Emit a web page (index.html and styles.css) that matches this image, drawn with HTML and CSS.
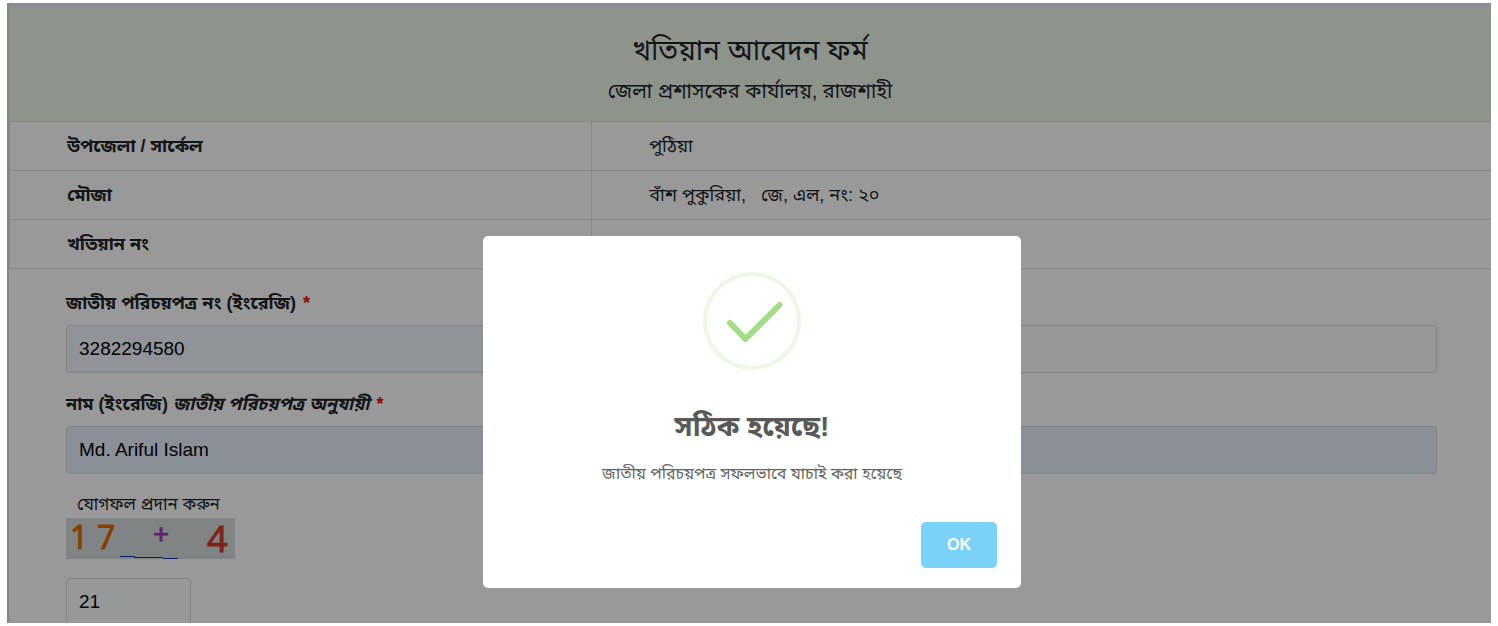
FILE: index.html
```html
<!DOCTYPE html>
<html lang="bn">
<head>
<meta charset="utf-8">
<meta name="viewport" content="width=device-width, initial-scale=1">
<title>খতিয়ান আবেদন ফর্ম</title>
<link rel="stylesheet" href="styles.css">
</head>
<body>
<div class="frame">
  <main class="page">
    <header class="page-header">
      <h1 class="page-title">খতিয়ান আবেদন ফর্ম</h1>
      <p class="page-subtitle">জেলা প্রশাসকের কার্যালয়, রাজশাহী</p>
    </header>
    <table class="info">
      <tbody>
        <tr><th scope="row">উপজেলা / সার্কেল</th><td>পুঠিয়া</td></tr>
        <tr><th scope="row">মৌজা</th><td>বাঁশ পুকুরিয়া, &nbsp; জে, এল, নং: ২০</td></tr>
        <tr><th scope="row">খতিয়ান নং</th><td></td></tr>
      </tbody>
    </table>
    <form class="form">
      <div class="field">
        <label class="label" for="nid">জাতীয় পরিচয়পত্র নং (ইংরেজি) <span class="required">*</span></label>
        <div class="pair">
          <input class="input input-checked input-start" id="nid" type="text" value="3282294580">
          <input class="input input-end" type="text" aria-label="জন্ম তারিখ">
        </div>
      </div>
      <div class="field">
        <label class="label" for="name">নাম (ইংরেজি) <em>জাতীয় পরিচয়পত্র অনুযায়ী</em> <span class="required">*</span></label>
        <input class="input input-filled" id="name" type="text" value="Md. Ariful Islam">
      </div>
      <div class="captcha">
        <label class="captcha-label" for="sum">যোগফল প্রদান করুন</label>
        <svg class="captcha-image" viewBox="0 0 169 41" role="img" aria-label="17 + 4">
          <text class="glyph glyph-orange" x="4" y="31">1</text>
          <text class="glyph glyph-orange" x="31" y="31">7</text>
          <text class="glyph glyph-plus" x="87" y="26">+</text>
          <text class="glyph glyph-red" x="141" y="34">4</text>
          <path class="rule" d="M54 38.500H69M68 39.500H97M97 40.500H112"/>
        </svg>
        <input class="input input-sum" id="sum" type="text" value="21">
      </div>
    </form>
  </main>
  <div class="overlay">
    <section class="modal" role="dialog" aria-modal="true" aria-labelledby="modal-title">
      <svg class="modal-icon" viewBox="0 0 98 98" aria-hidden="true">
        <circle class="ring" cx="49" cy="49" r="47"/>
        <path class="tick" d="M27 51L42.500 67L76.500 33"/>
      </svg>
      <h2 class="modal-title" id="modal-title">সঠিক হয়েছে!</h2>
      <p class="modal-text">জাতীয় পরিচয়পত্র সফলভাবে যাচাই করা হয়েছে</p>
      <div class="modal-footer"><button class="ok" type="button">OK</button></div>
    </section>
  </div>
</div>
</body>
</html>
```
FILE: styles.css
```css
* { box-sizing: border-box; }

body {
  margin: 0;
  height: 100vh;
  padding: 3px 7px;
  background: #fff;
  color: #212529;
  font-family: "Liberation Sans", "Noto Sans Bengali", sans-serif;
  font-size: 18px;
  line-height: 24px;
}

.frame {
  position: relative;
  height: 100%;
  overflow: hidden;
}

.page {
  min-height: 100%;
  border-top: 4px solid #e8ebf2;
  border-left: 2px solid #dcdcdc;
  background: #fff;
}

.page-header {
  height: 114px;
  padding-top: 24px;
  background: #edf5e9;
  text-align: center;
}

.page-title {
  margin: 0;
  font-size: 28px;
  font-weight: 400;
  line-height: 40px;
}

.page-subtitle {
  margin: 0;
  font-size: 20px;
  line-height: 40px;
}

.info {
  width: 100%;
  border-collapse: collapse;
  table-layout: fixed;
}

.info th,
.info td {
  height: 49px;
  padding: 0 57px;
  border: 1px solid #dee2e6;
  border-right: 0;
  text-align: left;
  line-height: 24px;
}

.info th { width: 39.3%; }

.form {
  padding: 20px 54px 0 57px;
}

.field { margin-bottom: 17px; }

.label {
  display: block;
  height: 36px;
  line-height: 28px;
  font-weight: 700;
}

.required {
  margin-left: 2px;
  color: #e00;
}

.pair {
  display: grid;
  grid-template-columns: 1fr 1fr;
}

.input {
  display: block;
  width: 100%;
  height: 48px;
  padding: 0 12px;
  border: 1px solid #d8dade;
  border-radius: 4px;
  background: #fcfdff;
  color: #000;
  font: inherit;
  font-size: 19px;
}

.input-filled { background: #e8f0fe; }
.input-checked { background: #f0f5fe; }
.input-start { border-radius: 4px 0 0 4px; }
.input-end { border-radius: 0 4px 4px 0; }

.captcha-label {
  display: block;
  padding-left: 11px;
  font-size: 17px;
  line-height: 27px;
}

.captcha-image {
  display: block;
  width: 169px;
  height: 41px;
  margin-bottom: 19px;
  overflow: visible;
  background: #d7dcdc;
}

.glyph {
  font-family: "Open Sans", sans-serif;
  font-size: 32px;
  stroke-width: 1;
}

.glyph-orange { fill: #e06c00; stroke: #e06c00; }
.glyph-plus { fill: #9b3fb5; stroke: #9b3fb5; font-size: 28px; }
.glyph-red { fill: #d33a2c; stroke: #d33a2c; font-size: 36px; }

.rule {
  fill: none;
  stroke: #2030b0;
  stroke-width: 1;
}

.input-sum { width: 125px; }

.overlay {
  position: absolute;
  inset: 0;
  display: flex;
  align-items: flex-start;
  justify-content: center;
  padding: 233px 0 0 6px;
  background: rgba(0, 0, 0, 0.4);
}

.modal {
  display: flex;
  flex-direction: column;
  align-items: center;
  width: 538px;
  max-width: 100%;
  padding: 36px 24px 20px;
  border-radius: 5px;
  background: #fff;
}

.modal-icon {
  width: 98px;
  height: 98px;
  margin-bottom: 36px;
}

.ring {
  fill: none;
  stroke: #edf8e7;
  stroke-width: 4;
}

.tick {
  fill: none;
  stroke: #a5dc86;
  stroke-width: 6;
  stroke-linecap: round;
  stroke-linejoin: round;
}

.modal-title {
  margin: 0 0 12px;
  color: #595959;
  font-size: 28px;
  line-height: 42px;
}

.modal-text {
  margin: 0 0 34px;
  color: #646464;
  font-size: 16px;
  line-height: 28px;
}

.modal-footer {
  display: flex;
  align-self: stretch;
  justify-content: flex-end;
}

.ok {
  height: 46px;
  padding: 0 26px;
  border: 0;
  border-radius: 5px;
  background: #7cd1f9;
  color: #fff;
  font-family: inherit;
  font-size: 16px;
  font-weight: 700;
}
```
